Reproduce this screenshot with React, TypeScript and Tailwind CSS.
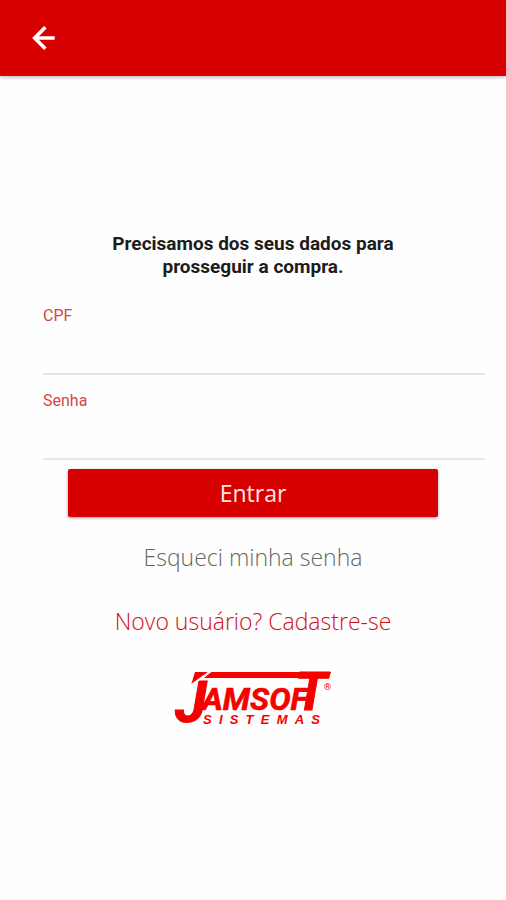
import { useState } from 'react';
import type { FormEvent } from 'react';

function Field({
  id,
  label,
  type = 'text',
  value,
  onChange,
}: {
  id: string;
  label: string;
  type?: string;
  value: string;
  onChange: (value: string) => void;
}) {
  return (
    <div className="flex h-[85px] flex-col border-b-2 border-[#e6e6e6] pt-4">
      <label htmlFor={id} className="text-base leading-5 text-[#d64545]">
        {label}
      </label>
      <input
        id={id}
        type={type}
        value={value}
        onChange={(e) => onChange(e.target.value)}
        className="w-full flex-1 bg-transparent text-lg text-[#222222] outline-none"
      />
    </div>
  );
}

function Logo() {
  return (
    <svg
      viewBox="0 0 160 56"
      className="h-14 w-40 overflow-visible"
      fill="#f60000"
      fontFamily="Roboto, sans-serif"
      fontWeight="bold"
      fontStyle="italic"
      role="img"
      aria-label="Jamsoft Sistemas"
    >
      <path d="M38 3H158L156 9H31Z" />
      <path d="M22 3H36L18 16Z" />
      <text x="2" y="53" fontSize="58" stroke="#f60000" strokeWidth="1">J</text>
      <path d="M14 19L38 2" stroke="#fefefe" strokeWidth="2" />
      <text x="29" y="41" fontSize="32" stroke="#f60000" strokeWidth="0.6">AMSOF</text>
      <text x="122" y="41" fontSize="53" stroke="#f60000" strokeWidth="1">T</text>
      <text x="30" y="55" fontSize="13" fontFamily="'Liberation Sans', sans-serif">
        {'S\u00a0\u00a0I\u00a0\u00a0S\u00a0\u00a0T\u00a0\u00a0E\u00a0\u00a0M\u00a0\u00a0A\u00a0\u00a0S'}
      </text>
      <text x="151" y="21" fontSize="9" fontWeight="normal" fontStyle="normal">®</text>
    </svg>
  );
}

export default function App() {
  const [cpf, setCpf] = useState('');
  const [senha, setSenha] = useState('');

  const handleSubmit = (e: FormEvent) => {
    e.preventDefault();
  };

  return (
    <div className="min-h-screen bg-[#fefefe] font-['Roboto',sans-serif]">
      <header className="flex h-[76px] items-center bg-[#d60000] pl-7 shadow-[0_1px_4px_rgba(0,0,0,0.3)]">
        <button type="button" aria-label="Voltar" className="flex size-8 items-center justify-center text-white">
          <svg viewBox="0 0 24 24" className="size-8" fill="none" stroke="currentColor" strokeWidth="2.7">
            <path d="M20 12H5.5M13 4L5 12l8 8" />
          </svg>
        </button>
      </header>

      <main className="flex flex-col items-center pt-[156px]">
        <h1 className="w-80 text-center text-[19px] leading-[23px] font-bold text-[#1c1c1c]">
          Precisamos dos seus dados para prosseguir a compra.
        </h1>

        <form onSubmit={handleSubmit} className="flex w-full flex-col pt-3">
          <div className="pr-[21px] pl-[43px]">
            <Field id="cpf" label="CPF" value={cpf} onChange={setCpf} />
            <Field id="senha" label="Senha" type="password" value={senha} onChange={setSenha} />
          </div>
          <button
            type="submit"
            className="mx-[68px] mt-[9px] h-12 rounded-xs bg-[#d60000] font-['Open_Sans',sans-serif] text-[23px] text-[#ffe5e5] shadow-[0_1px_3px_rgba(0,0,0,0.4)]"
          >
            Entrar
          </button>
        </form>

        <nav className="flex flex-col items-center gap-8 pt-6 font-['Open_Sans',sans-serif] text-[23px] leading-8 font-light">
          <a href="#recuperar" className="text-[#666666]">
            Esqueci minha senha
          </a>
          <a href="#cadastro" className="text-[#d01020]">
            Novo usuário? Cadastre-se
          </a>
        </nav>

        <div className="pt-8">
          <Logo />
        </div>
      </main>
    </div>
  );
}
